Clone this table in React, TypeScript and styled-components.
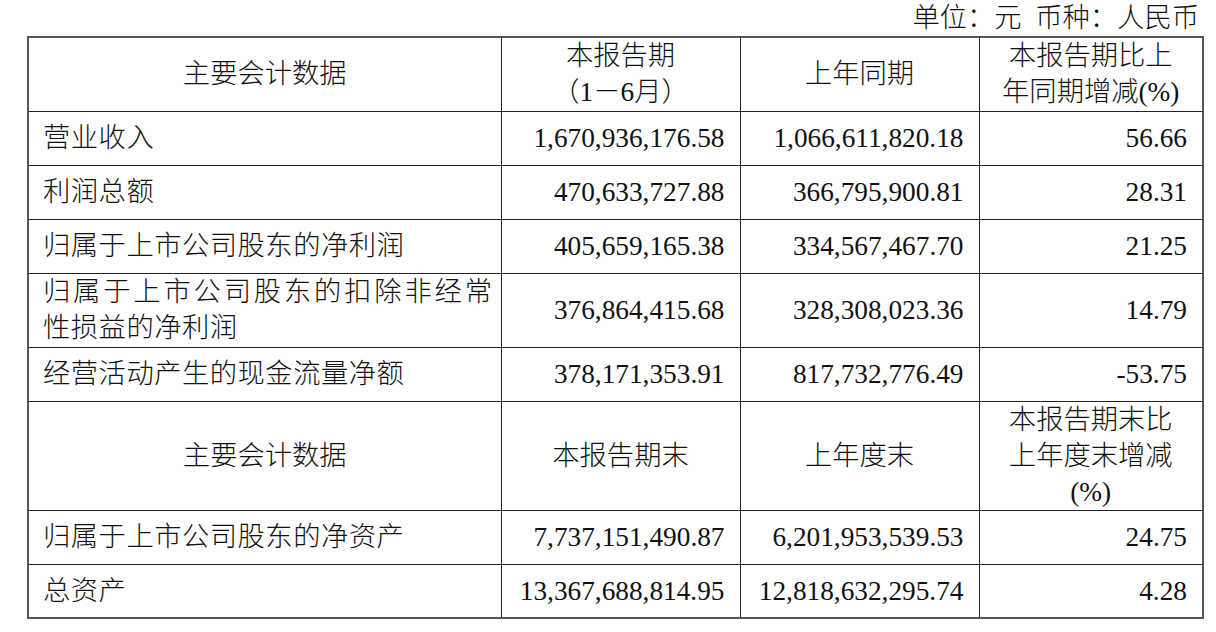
import React from "react";
import styled, { createGlobalStyle } from "styled-components";

const Global = createGlobalStyle`
  html, body { margin: 0; padding: 0; background: #fff; }
  body {
    font-family: "Liberation Serif", "Noto Sans CJK SC", serif;
    font-size: 27.3px;
    color: #111;
  }
`;

const Page = styled.div`
  width: 1216px;
  height: 632px;
  padding: 0 14px 0 27px;
  box-sizing: border-box;
  display: flex;
  flex-direction: column;
`;

const Unit = styled.div`
  height: 36px;
  display: flex;
  align-items: center;
  justify-content: flex-end;
  padding-right: 3px;
  font-weight: 300;
  line-height: 36px;
  white-space: pre;
`;

const Table = styled.table`
  width: 1175px;
  border-collapse: collapse;
  table-layout: fixed;
  border: 2px solid #555;
`;

const Row = styled.tr<{ $h: number }>`
  height: ${(p) => p.$h}px;
`;

const Cell = styled.td<{ $align?: "left" | "center" | "right" }>`
  border: 1px solid #222;
  padding: 0 ${(p) => (p.$align === "right" ? "15px" : "4px")} 0
    ${(p) => (p.$align === "left" ? "14px" : "4px")};
  text-align: ${(p) => p.$align ?? "left"};
  letter-spacing: ${(p) => (p.$align === "left" ? "0.5px" : "0")};
  vertical-align: middle;
  line-height: 36px;
  font-weight: 300;
  white-space: nowrap;
  overflow: hidden;
`;

const Line = styled.span<{ $justify?: boolean }>`
  display: block;
  text-align: ${(p) => (p.$justify ? "justify" : "inherit")};
  text-align-last: ${(p) => (p.$justify ? "justify" : "auto")};
  padding-right: ${(p) => (p.$justify ? "4px" : "0")};
`;

type DataRow = { label: string[]; a: string; b: string; c: string; h: number };

const top: DataRow[] = [
  { label: ["营业收入"], a: "1,670,936,176.58", b: "1,066,611,820.18", c: "56.66", h: 54 },
  { label: ["利润总额"], a: "470,633,727.88", b: "366,795,900.81", c: "28.31", h: 54 },
  { label: ["归属于上市公司股东的净利润"], a: "405,659,165.38", b: "334,567,467.70", c: "21.25", h: 54 },
  {
    label: ["归属于上市公司股东的扣除非经常", "性损益的净利润"],
    a: "376,864,415.68",
    b: "328,308,023.36",
    c: "14.79",
    h: 74,
  },
  { label: ["经营活动产生的现金流量净额"], a: "378,171,353.91", b: "817,732,776.49", c: "-53.75", h: 54 },
];

const bottom: DataRow[] = [
  { label: ["归属于上市公司股东的净资产"], a: "7,737,151,490.87", b: "6,201,953,539.53", c: "24.75", h: 54 },
  { label: ["总资产"], a: "13,367,688,814.95", b: "12,818,632,295.74", c: "4.28", h: 54 },
];

const Body = ({ rows }: { rows: DataRow[] }) => (
  <>
    {rows.map((r) => (
      <Row $h={r.h} key={r.label.join("")}>
        <Cell $align="left">
          {r.label.length > 1
            ? r.label.map((l, i) => (
                <Line key={l} $justify={i === 0}>
                  {l}
                </Line>
              ))
            : r.label[0]}
        </Cell>
        <Cell $align="right">{r.a}</Cell>
        <Cell $align="right">{r.b}</Cell>
        <Cell $align="right">{r.c}</Cell>
      </Row>
    ))}
  </>
);

export default function App() {
  return (
    <>
      <Global />
      <Page>
        <Unit>{"单位：元  币种：人民币"}</Unit>
        <Table>
          <colgroup>
            <col style={{ width: 473 }} />
            <col style={{ width: 239 }} />
            <col style={{ width: 239 }} />
            <col style={{ width: 224 }} />
          </colgroup>
          <tbody>
            <Row $h={74}>
              <Cell $align="center">主要会计数据</Cell>
              <Cell $align="center">
                <Line>本报告期</Line>
                <Line>（1－6月）</Line>
              </Cell>
              <Cell $align="center">上年同期</Cell>
              <Cell $align="center">
                <Line>本报告期比上</Line>
                <Line>年同期增减(%)</Line>
              </Cell>
            </Row>
            <Body rows={top} />
            <Row $h={107}>
              <Cell $align="center">主要会计数据</Cell>
              <Cell $align="center">本报告期末</Cell>
              <Cell $align="center">上年度末</Cell>
              <Cell $align="center">
                <Line>本报告期末比</Line>
                <Line>上年度末增减</Line>
                <Line>(%)</Line>
              </Cell>
            </Row>
            <Body rows={bottom} />
          </tbody>
        </Table>
      </Page>
    </>
  );
}
